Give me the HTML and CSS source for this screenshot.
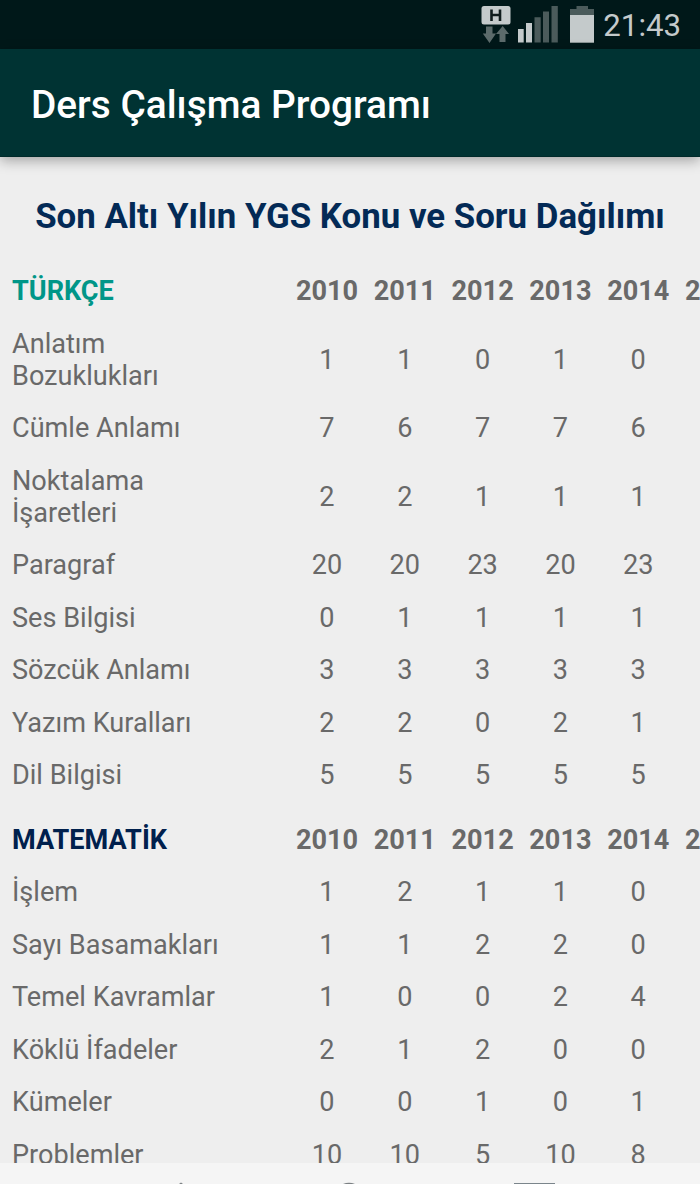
FILE: index.html
```
<!DOCTYPE html>
<html lang="tr">
<head>
  <meta charset="utf-8">
  <title>Ders Çalışma Programı</title>
  <meta name="viewport" content="width=device-width, initial-scale=1">
  <link rel="stylesheet" href="styles.css">
</head>
<body>
  <div class="status-bar">
    <svg class="status-icons" width="116" height="48" viewBox="0 0 116 48">
      <!-- mobile data -->
      <rect x="1.500" y="6" width="29" height="18.500" rx="2.500" fill="#c4cacb"/>
      <path d="M11.500 9.500v11.500M20 9.500v11.500M11.500 15h8.500" fill="none" stroke="#101c1d" stroke-width="2.600"/>
      <path d="M6 26.500h6.500v7h3.500l-6.500 9.500-6.700-9.500h3.200z" fill="#5c6b6b"/>
      <path d="M19.500 42h6v-8h3.500l-6.300-8-6.700 8h3.500z" fill="#5c6b6b"/>
      <!-- signal -->
      <path d="M38 29h5.700v13.500h-5.700zM46 23h6v19.500h-6z" fill="#c4cacb"/>
      <path d="M54.500 17.300h6.200v25.200h-6.200zM63 11.500h6v31h-6zM71.500 6h6.300v36.500h-6.300z" fill="#4b5b5b"/>
      <!-- battery -->
      <path d="M90 15v-6h6.500v-3h11.500v3h6v6z" fill="#4b5b5b"/>
      <path d="M90 15h24v27.700h-24z" fill="#c4cacb"/>
    </svg>
    <span class="clock">21:43</span>
  </div>

  <header class="app-bar">
    <h1>Ders Çalışma Programı</h1>
  </header>

  <main class="content">
    <h2>Son Altı Yılın YGS Konu ve Soru Dağılımı</h2>

    <table class="topics">
      <thead>
        <tr><th class="subject turkce">TÜRKÇE</th><th>2010</th><th>2011</th><th>2012</th><th>2013</th><th>2014</th><th>2015</th></tr>
      </thead>
      <tbody>
        <tr><td>Anlatım<br>Bozuklukları</td><td>1</td><td>1</td><td>0</td><td>1</td><td>0</td><td></td></tr>
        <tr><td>Cümle Anlamı</td><td>7</td><td>6</td><td>7</td><td>7</td><td>6</td><td></td></tr>
        <tr><td>Noktalama<br>İşaretleri</td><td>2</td><td>2</td><td>1</td><td>1</td><td>1</td><td></td></tr>
        <tr><td>Paragraf</td><td>20</td><td>20</td><td>23</td><td>20</td><td>23</td><td></td></tr>
        <tr><td>Ses Bilgisi</td><td>0</td><td>1</td><td>1</td><td>1</td><td>1</td><td></td></tr>
        <tr><td>Sözcük Anlamı</td><td>3</td><td>3</td><td>3</td><td>3</td><td>3</td><td></td></tr>
        <tr><td>Yazım Kuralları</td><td>2</td><td>2</td><td>0</td><td>2</td><td>1</td><td></td></tr>
        <tr><td>Dil Bilgisi</td><td>5</td><td>5</td><td>5</td><td>5</td><td>5</td><td></td></tr>
      </tbody>
    </table>

    <table class="topics">
      <thead>
        <tr><th class="subject matematik">MATEMATİK</th><th>2010</th><th>2011</th><th>2012</th><th>2013</th><th>2014</th><th>2015</th></tr>
      </thead>
      <tbody>
        <tr><td>İşlem</td><td>1</td><td>2</td><td>1</td><td>1</td><td>0</td><td></td></tr>
        <tr><td>Sayı Basamakları</td><td>1</td><td>1</td><td>2</td><td>2</td><td>0</td><td></td></tr>
        <tr><td>Temel Kavramlar</td><td>1</td><td>0</td><td>0</td><td>2</td><td>4</td><td></td></tr>
        <tr><td>Köklü İfadeler</td><td>2</td><td>1</td><td>2</td><td>0</td><td>0</td><td></td></tr>
        <tr><td>Kümeler</td><td>0</td><td>0</td><td>1</td><td>0</td><td>1</td><td></td></tr>
        <tr><td>Problemler</td><td>10</td><td>10</td><td>5</td><td>10</td><td>8</td><td></td></tr>
      </tbody>
    </table>
  </main>

  <footer class="nav-bar">
    <svg width="700" height="21" viewBox="0 0 700 21">
      <path d="M179 21l2-1.500 2 1.500z" fill="#7b8083"/>
      <path d="M343 21q6-2.500 12 0z" fill="#7b8083"/>
      <path d="M514 20h41v1h-41z" fill="#7b858b"/>
    </svg>
  </footer>
</body>
</html>
```
FILE: styles.css
```
* {
  box-sizing: border-box;
}
body {
  display: flex;
  flex-direction: column;
  height: 1184px;
  margin: 0;
  overflow: hidden;
  background: #eeeeee;
  color: #696969;
  font-family: Roboto, "Noto Sans", sans-serif;
}

.status-bar {
  display: flex;
  flex: none;
  justify-content: flex-end;
  height: 49px;
  padding-right: 19px;
  background: #001819;
}
.status-icons {
  margin-right: 7px;
}
.clock {
  color: #c4cacb;
  font-size: 31.2px;
  line-height: 51px;
}

.app-bar {
  position: relative;
  flex: none;
  height: 108px;
  padding-left: 31px;
  background: #003333;
  border-bottom: 1px solid #002a2a;
  box-shadow: 0 4px 12px rgba(0, 0, 0, 0.3);
}
.app-bar h1 {
  margin: 0;
  color: #fff;
  font-size: 38.8px;
  font-weight: 500;
  line-height: 112px;
}

.content {
  flex: 1;
  min-height: 0;
  overflow: hidden;
}
h2 {
  margin: 0;
  padding-top: 39px;
  height: 108px;
  color: #032a56;
  font-size: 34.85px;
  font-weight: 700;
  line-height: 42px;
  text-align: center;
  white-space: nowrap;
}

.topics {
  width: 743px;
  margin: 0 0 12px 12px;
  table-layout: fixed;
  border-collapse: collapse;
  font-size: 27.1px;
  line-height: 32px;
}
.topics th,
.topics td {
  width: 77.8px;
  padding: 10.25px 0;
  text-align: center;
}
.topics th:first-child,
.topics td:first-child {
  width: 276px;
  text-align: left;
}
.topics .turkce {
  color: #009688;
}
.topics .matematik {
  color: #00204d;
}

.nav-bar {
  flex: none;
  height: 21px;
  background: #f5f5f5;
}
.nav-bar svg {
  display: block;
}
```
